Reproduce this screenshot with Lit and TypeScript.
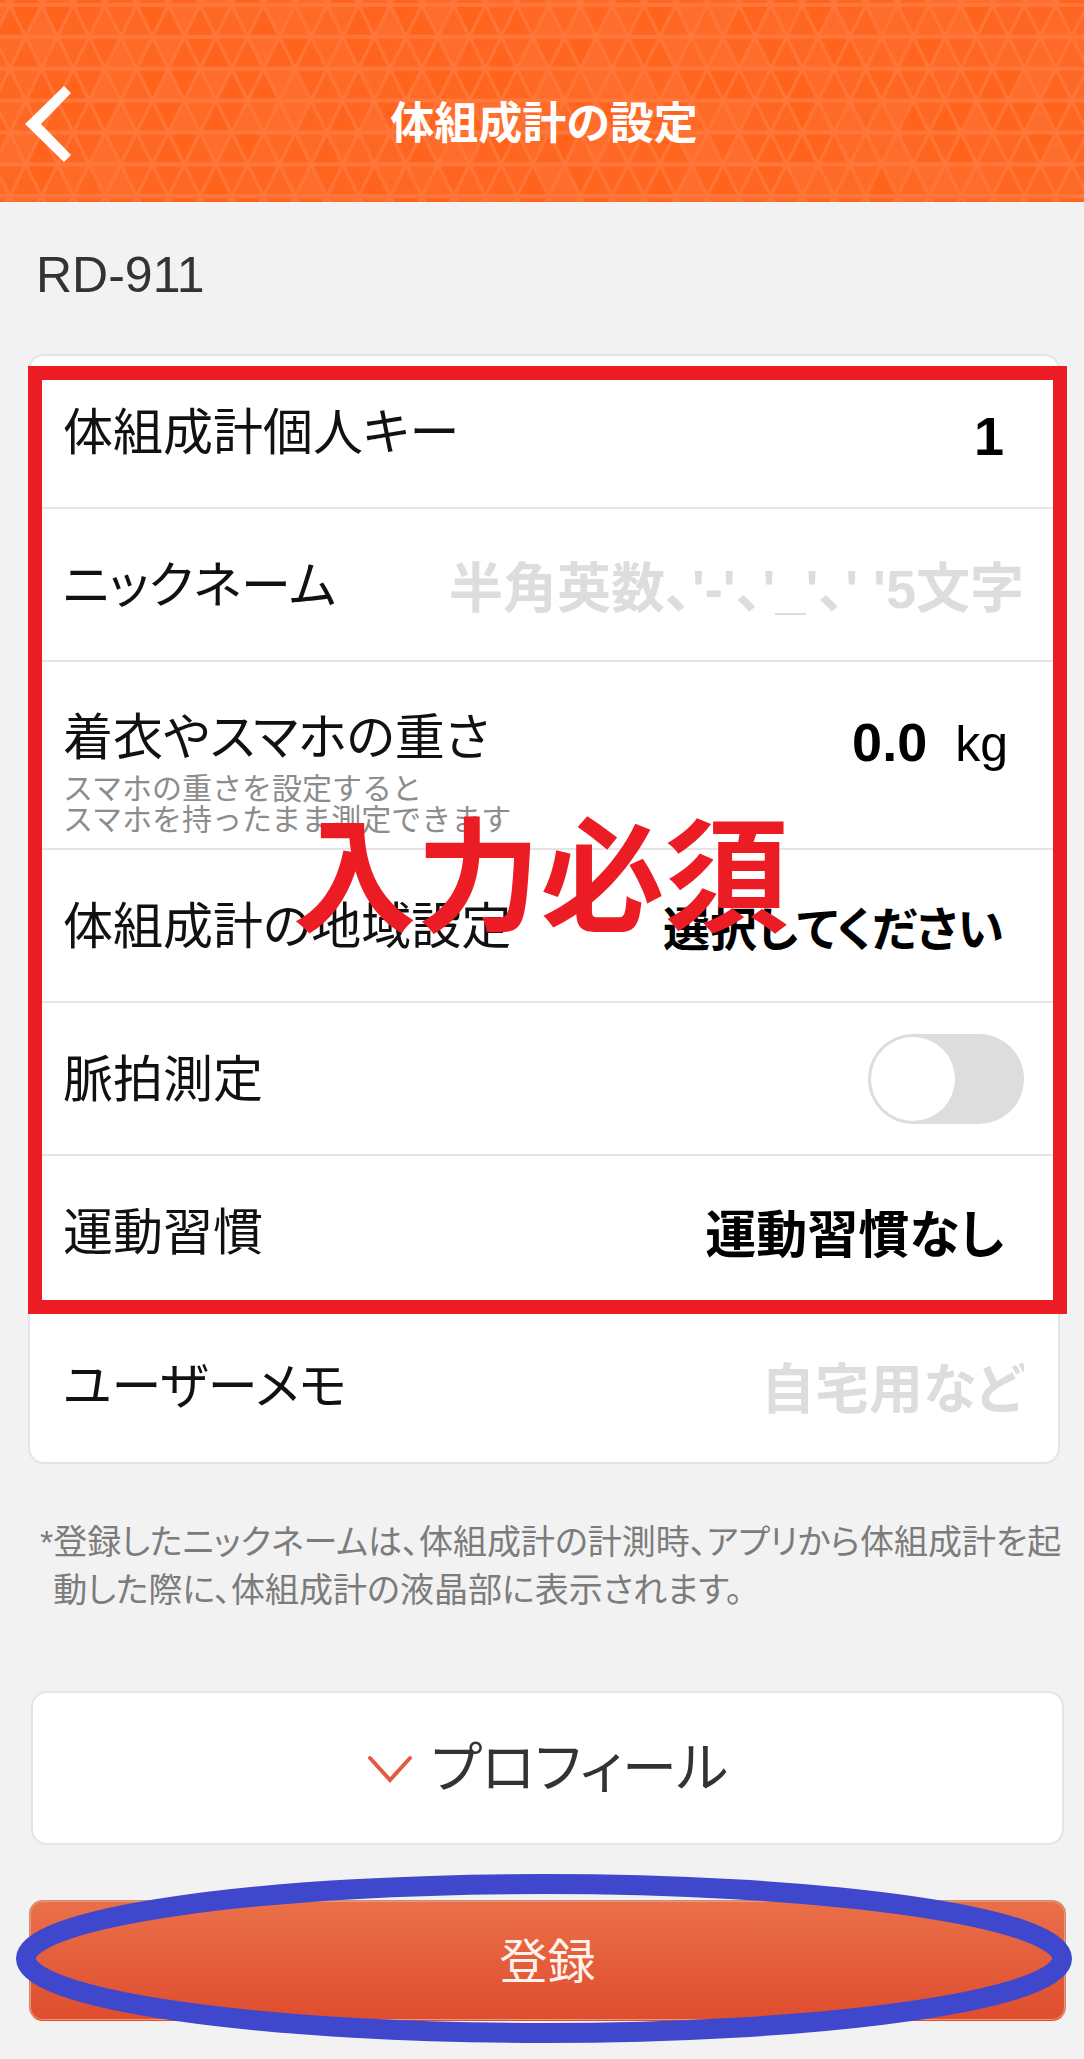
import { LitElement, html, css, svg } from "lit";
import { customElement, state } from "lit/decorators.js";

const TRI_W = 31.7;
const TRI_H = 31.9;
const COLS = 36;
const ROWS = 8;
const SHADES = ["#ff631c", "#ff651f", "#ff6621", "#ff6824", "#ff6a27", "#ff6d2c"];

function shade(row: number, col: number): string {
  let h = (row * 374761393 + col * 668265263) | 0;
  h = Math.imul(h ^ (h >>> 13), 1274126177);
  h = (h ^ (h >>> 16)) >>> 0;
  return SHADES[h % SHADES.length];
}

@customElement("triangle-backdrop")
export class TriangleBackdrop extends LitElement {
  static styles = css`
    :host {
      display: block;
    }
    .art {
      display: block;
      width: 100%;
      height: 100%;
    }
  `;

  render() {
    const half = TRI_W / 2;
    const shapes = [];
    let edges = "";
    for (let r = 0; r < ROWS; r++) {
      const top = r * TRI_H;
      const base = top + TRI_H;
      const shift = r % 2 === 0 ? half : 0;
      for (let c = -1; c <= COLS; c++) {
        const x = c * TRI_W + shift;
        const wrap = (c + COLS) % COLS;
        shapes.push(svg`<polygon fill=${shade(r, wrap * 2)}
          points="${x},${base} ${x + half},${top} ${x + TRI_W},${base}" />`);
        shapes.push(svg`<polygon fill=${shade(r, wrap * 2 + 1)}
          points="${x + half},${top} ${x + TRI_W + half},${top} ${x + TRI_W},${base}" />`);
        edges += `M${x} ${base}L${x + half} ${top}L${x + TRI_W} ${base}`;
      }
    }
    let rules = "";
    for (let r = 0; r <= ROWS; r++) {
      rules += `M0 ${r * TRI_H}H${COLS * TRI_W}`;
    }
    return html`
      <svg class="art" aria-hidden="true">
        <defs>
          <pattern id="tri" patternUnits="userSpaceOnUse" x="-6" y="-27"
            width=${COLS * TRI_W} height=${ROWS * TRI_H}>
            ${shapes}
            <path d=${edges} fill="none" stroke="#ff7638" stroke-width="3" />
            <path d=${rules} fill="none" stroke="#ff773a" stroke-width="4" />
          </pattern>
        </defs>
        <rect width="100%" height="100%" fill="url(#tri)" />
      </svg>
    `;
  }
}

@customElement("app-root")
export class AppRoot extends LitElement {
  @state() private pulse = false;

  static styles = css`
    :host {
      display: block;
      min-height: 100vh;
      box-sizing: border-box;
      background: #f2f2f2;
      color: #111;
      font-family: "Liberation Sans", "Noto Sans CJK JP", sans-serif;
      font-feature-settings: "palt";
    }
    * {
      box-sizing: border-box;
    }
    button,
    input,
    select {
      font: inherit;
      font-feature-settings: "palt";
      color: inherit;
      margin: 0;
      padding: 0;
      border: 0;
      border-radius: 0;
      background: none;
      appearance: none;
      outline-offset: 2px;
    }
    .header {
      position: relative;
      display: grid;
      grid-template-columns: 96px 1fr 92px;
      align-items: center;
      height: 202px;
      padding-top: 46px;
      color: #fff;
      overflow: hidden;
    }
    .backdrop {
      position: absolute;
      inset: 0;
    }
    .back {
      position: relative;
      padding-left: 24px;
      justify-self: start;
      cursor: pointer;
    }
    .back svg {
      display: block;
    }
    .title {
      position: relative;
      margin: 0;
      text-align: center;
      font-size: 44px;
      line-height: 64px;
      font-weight: 700;
    }
    .content {
      padding: 43px 20px 36px 28px;
    }
    .model {
      margin: 0 0 49px;
      padding-left: 8px;
      font-size: 50px;
      line-height: 60px;
      font-weight: 400;
      color: #333;
    }
    .card-wrap {
      position: relative;
      margin: 0 4px 0 0;
    }
    .card {
      border: 2px solid #e4e4e8;
      border-radius: 16px;
      background: #fff;
    }
    .row {
      display: flex;
      align-items: center;
      min-height: 153px;
      padding: 0 34px 0 33px;
      border-bottom: 2px solid #e4e4e4;
    }
    .row:last-child {
      border-bottom: 0;
    }
    .row.tall {
      align-items: flex-start;
      padding-top: 44px;
      padding-bottom: 13px;
    }
    .label {
      display: block;
      flex: none;
      padding-top: 2px;
      font-size: 50px;
      line-height: 60px;
    }
    .hint {
      margin: 5px 0 0;
      font-size: 30px;
      line-height: 31px;
      color: #8c8c8c;
      font-feature-settings: normal;
    }
    .value {
      flex: 1;
      min-width: 0;
      width: 0;
      padding-top: 8px;
      text-align: right;
      text-align-last: right;
      font-weight: 700;
      font-size: 54px;
      line-height: 72px;
      height: 80px;
      color: #000;
    }
    .value.small {
      font-size: 47px;
    }
    .value.medium {
      font-size: 51px;
    }
    select.value {
      padding-right: 20px;
    }
    .value::placeholder {
      color: #ddd;
      opacity: 1;
    }
    .measure {
      flex: 1;
      display: flex;
      align-items: baseline;
      gap: 28px;
      padding-right: 16px;
      min-width: 0;
    }
    .measure .value {
      padding-top: 0;
      height: 72px;
    }
    .unit {
      font-size: 50px;
      line-height: 72px;
      color: #000;
    }
    .spacer {
      flex: 1;
    }
    .switch {
      display: flex;
      align-items: center;
      width: 156px;
      height: 90px;
      padding: 3px;
      border-radius: 45px;
      background: #ddd;
      cursor: pointer;
    }
    .switch::before {
      content: "";
      width: 84px;
      height: 84px;
      border-radius: 42px;
      background: #fff;
    }
    .switch:checked {
      justify-content: flex-end;
      background: #ff6a26;
    }
    .required {
      position: absolute;
      top: 12px;
      left: 0;
      right: -7px;
      bottom: 150px;
      display: flex;
      align-items: center;
      justify-content: center;
      padding: 78px 14px 0 0;
      border: 14px solid #ec1c24;
      color: #ec1c24;
      font-size: 124px;
      line-height: 140px;
      font-weight: 700;
      pointer-events: none;
    }
    .note {
      display: flex;
      margin: 54px 0 0;
      padding-left: 12px;
      font-size: 34px;
      line-height: 48px;
      color: #7c7c7c;
      white-space: nowrap;
    }
    .profile {
      display: flex;
      align-items: center;
      justify-content: center;
      gap: 18px;
      width: calc(100% - 3px);
      height: 154px;
      margin: 77px 0 0 3px;
      border: 2px solid #e4e4e4;
      border-radius: 16px;
      background: #fff;
      color: #333;
      font-size: 55px;
      line-height: 80px;
      cursor: pointer;
    }
    .profile svg {
      margin-top: 4px;
    }
    .submit-wrap {
      position: relative;
      margin: 55px -2px 0 1px;
    }
    .submit {
      display: block;
      width: 100%;
      height: 121px;
      padding-top: 4px;
      border: 1px solid #c98c78;
      border-bottom-color: #df4e2e;
      border-radius: 14px;
      background: linear-gradient(#ea7049, #df4d2e);
      box-shadow: inset 0 0 0 1px #ee9676;
      color: #fff3ec;
      font-size: 48px;
      line-height: 72px;
      cursor: pointer;
    }
    .ring {
      position: absolute;
      top: -16px;
      left: -3px;
      width: calc(100% - 1px);
      height: calc(100% + 28px);
      overflow: visible;
      pointer-events: none;
    }
  `;

  render() {
    return html`
      <header class="header">
        <triangle-backdrop class="backdrop"></triangle-backdrop>
        <button class="back" type="button" aria-label="戻る">
          <svg width="48" height="78" viewBox="0 0 48 78" aria-hidden="true">
            <path fill="#fff" d="M1 39L40 1L47 8L17 39L47 70L40 77Z" />
          </svg>
        </button>
        <h1 class="title">体組成計の設定</h1>
      </header>

      <main class="content">
        <h2 class="model">RD-911</h2>

        <div class="card-wrap">
          <div class="card">
            <div class="row">
              <label class="label" for="key">体組成計個人キー</label>
              <select class="value" id="key">
                <option>1</option>
              </select>
            </div>
            <div class="row">
              <label class="label" for="nick">ニックネーム</label>
              <input class="value" id="nick" type="text" maxlength="5"
                placeholder="半角英数、'-'、'_'、' '5文字" />
            </div>
            <div class="row tall">
              <div>
                <label class="label" for="weight">着衣やスマホの重さ</label>
                <p class="hint">スマホの重さを設定すると<br />スマホを持ったまま測定できます</p>
              </div>
              <div class="measure">
                <input class="value" id="weight" type="text" inputmode="decimal" .value=${"0.0"} />
                <span class="unit">kg</span>
              </div>
            </div>
            <div class="row">
              <label class="label" for="region">体組成計の地域設定</label>
              <select class="value small" id="region">
                <option>選択してください</option>
              </select>
            </div>
            <div class="row">
              <label class="label" for="pulse">脈拍測定</label>
              <span class="spacer"></span>
              <input class="switch" id="pulse" type="checkbox" role="switch"
                .checked=${this.pulse}
                @change=${(e: Event) => (this.pulse = (e.target as HTMLInputElement).checked)} />
            </div>
            <div class="row">
              <label class="label" for="habit">運動習慣</label>
              <select class="value medium" id="habit">
                <option>運動習慣なし</option>
              </select>
            </div>
            <div class="row">
              <label class="label" for="memo">ユーザーメモ</label>
              <input class="value" id="memo" type="text" placeholder="自宅用など" />
            </div>
          </div>
          <div class="required"><span>入力必須</span></div>
        </div>

        <p class="note">
          <span>*</span>
          <span>登録したニックネームは、体組成計の計測時、アプリから体組成計を起<br />動した際に、体組成計の液晶部に表示されます。</span>
        </p>

        <button class="profile" type="button">
          <svg width="46" height="30" viewBox="0 0 46 30" aria-hidden="true">
            <path d="M3 3L23 25L43 3" fill="none" stroke="#e25c40" stroke-width="4" stroke-linecap="round" />
          </svg>
          <span>プロフィール</span>
        </button>

        <div class="submit-wrap">
          <button class="submit" type="button">登録</button>
          <svg class="ring" aria-hidden="true">
            <ellipse cx="50%" cy="50%" rx="50%" ry="50%" fill="none" stroke="#3f48cc" stroke-width="20" />
          </svg>
        </div>
      </main>
    `;
  }
}
